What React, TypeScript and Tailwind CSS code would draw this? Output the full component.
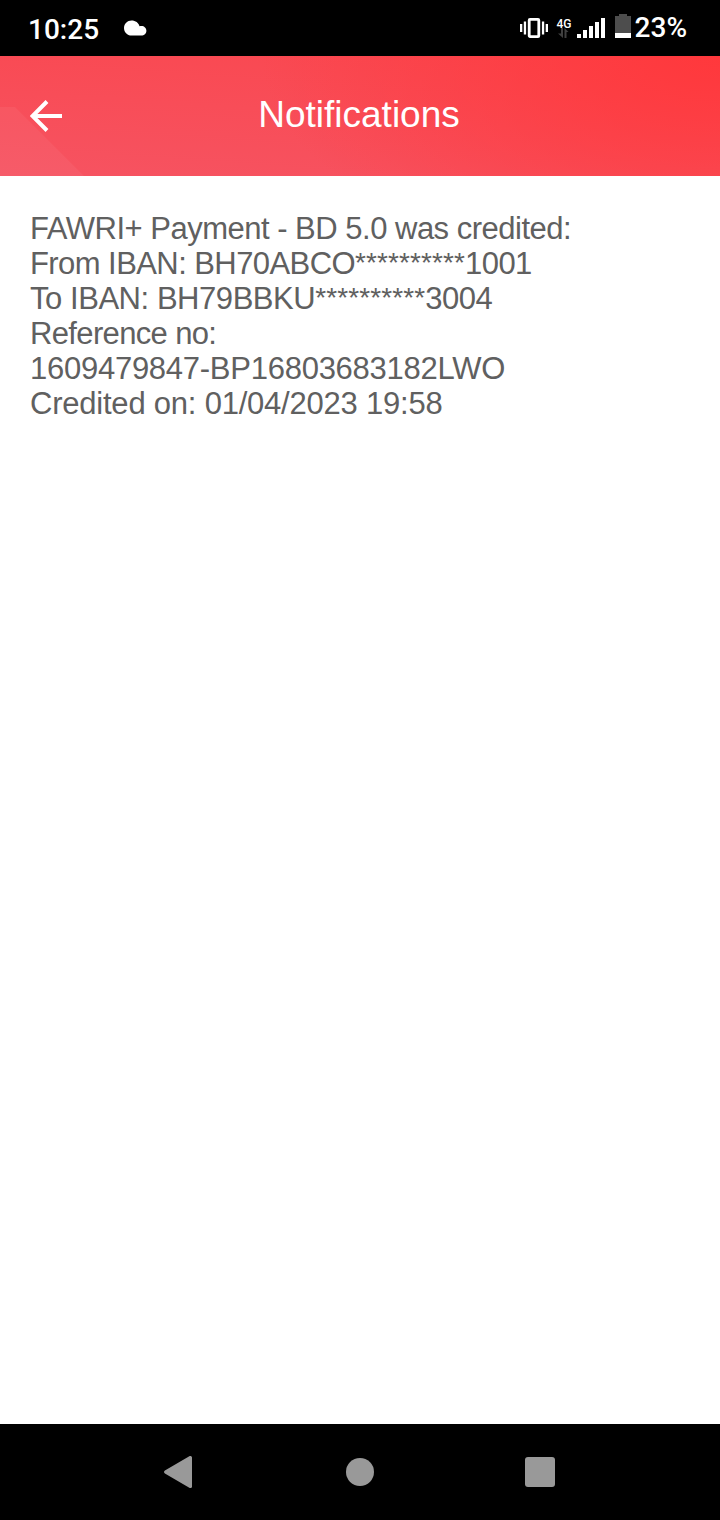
const messageLines = [
    { text: "FAWRI+ Payment - BD 5.0 was credited:", className: "tracking-[-0.5px]" },
    { text: "From IBAN: BH70ABCO", masked: "**********", tail: "1001", className: "tracking-[-0.57px]" },
    { text: "To IBAN: BH79BBKU", masked: "**********", tail: "3004", className: "tracking-[-0.45px]" },
    { text: "Reference no:", className: "tracking-[-0.65px]" },
    { text: "1609479847-BP16803683182LWO", className: "tracking-[-0.26px]" },
    { text: "Credited on: 01/04/2023 19:58", className: "tracking-[-0.22px]" },
];

function StatusBar() {
    return (
        <div className="h-14 shrink-0 bg-black text-white flex items-center justify-between pl-7 pr-[33px] font-['Roboto',sans-serif] font-medium text-[28px] leading-none">
            <div className="flex items-center">
                <span className="w-[96px] pt-[3px]">10:25</span>
                <svg width="23" height="16" viewBox="0 0 23 16" fill="currentColor">
                    <path d="M7.5 0.4C3.4 0.4 0 3.8 0 7.9C0 12 3.2 15.5 7.5 15.5H17.3C20.2 15.5 22.4 13.4 22.4 10.7C22.4 8 20.2 5.9 17.5 5.9C16.8 5.9 16.1 6 15.5 6.2C14.7 2.8 11.5 0.4 7.5 0.4Z" />
                </svg>
            </div>
            <div className="flex items-center">
                <svg width="28" height="20" viewBox="0 0 28 20" fill="currentColor">
                    <rect x="0" y="6" width="2.3" height="8" />
                    <rect x="3.8" y="3.5" width="2.3" height="13" />
                    <rect x="21.9" y="3.5" width="2.3" height="13" />
                    <rect x="25.7" y="6" width="2.3" height="8" />
                    <rect x="9.2" y="1.4" width="9.6" height="17.2" rx="0.8" fill="none" stroke="currentColor" strokeWidth="2.8" />
                </svg>
                <div className="ml-[9px] w-[20px] h-5 flex flex-col">
                    <span className="h-[10px] text-[12px] leading-[13px] font-medium">4G</span>
                    <svg width="12" height="10" viewBox="0 0 12 10" className="ml-px text-[#404040]" fill="currentColor">
                        <path d="M3 0H5V10L0 5.5H3Z" />
                        <path d="M6.5 0L10.5 4H8.5V10H6.5Z" />
                    </svg>
                </div>
                <svg width="28" height="20" viewBox="0 0 28 20" fill="currentColor">
                    <rect x="0" y="16" width="4" height="4" />
                    <rect x="6" y="12" width="4" height="8" />
                    <rect x="12" y="8" width="4" height="12" />
                    <rect x="18" y="4" width="4" height="16" />
                    <rect x="24" y="0" width="4" height="20" />
                </svg>
                <svg width="16" height="24" viewBox="0 0 16 24" className="ml-[10px] mr-1 mb-1">
                    <path d="M4 0H12V2H16V24H0V2H4Z" fill="#4d4d4d" />
                    <rect y="19" width="16" height="5" fill="white" />
                </svg>
                <span>23%</span>
            </div>
        </div>
    );
}

function Header() {
    return (
        <header className="h-30 shrink-0 relative grid grid-cols-[1fr_auto_1fr] items-center text-white bg-[radial-gradient(ellipse_460px_220px_at_100%_0%,#ff383c_0%,#ff383c00_100%),linear-gradient(184deg,#fa474f_0%,#f65361_100%)]">
            {/* lighter facet in the lower left corner */}
            <svg className="absolute left-0 top-[51px]" width="84" height="69" viewBox="0 0 84 69">
                <path d="M0 0H15L84 69H0Z" fill="white" fillOpacity="0.05" />
            </svg>
            <button type="button" aria-label="Back" className="relative ml-[30px] w-8">
                <svg width="32" height="32" viewBox="0 0 32 32" fill="none" stroke="currentColor" strokeWidth="4">
                    <path d="M32 16H4" />
                    <path d="M17 1.5L2.5 16L17 30.5" />
                </svg>
            </button>
            <h1 className="text-[37px] leading-none pb-1 -translate-x-px">Notifications</h1>
        </header>
    );
}

function NavBar() {
    return (
        <nav className="h-24 shrink-0 bg-black pl-[164px] flex items-center text-[#999999]">
            <svg width="28" height="32" viewBox="0 0 28 32" fill="currentColor">
                <path d="M25.3 0.3C26.5 -0.4 28 0.3 28 1.6V30.4C28 31.7 26.5 32.4 25.3 31.7L0.9 17.4C-0.3 16.7 -0.3 15.3 0.9 14.6Z" />
            </svg>
            <div className="ml-[154px] size-7 rounded-full bg-current" />
            <div className="ml-[151px] size-[30px] rounded-[3px] bg-current" />
        </nav>
    );
}

export default function App() {
    return (
        <div className="w-[720px] h-[1520px] flex flex-col bg-white font-['Liberation_Sans',Arial,sans-serif]">
            <StatusBar />
            <Header />
            <main className="flex-1 px-[30px] pt-[35px] text-[31px] leading-[35px] text-[#606060]">
                {messageLines.map((line) => (
                    <p key={line.text} className={`whitespace-nowrap ${line.className}`}>
                        {line.text}
                        {line.masked && (
                            <span className="inline-block -translate-y-0.5 text-[28px] leading-none tracking-[0.1px]">{line.masked}</span>
                        )}
                        {line.tail}
                    </p>
                ))}
            </main>
            <NavBar />
        </div>
    );
}
